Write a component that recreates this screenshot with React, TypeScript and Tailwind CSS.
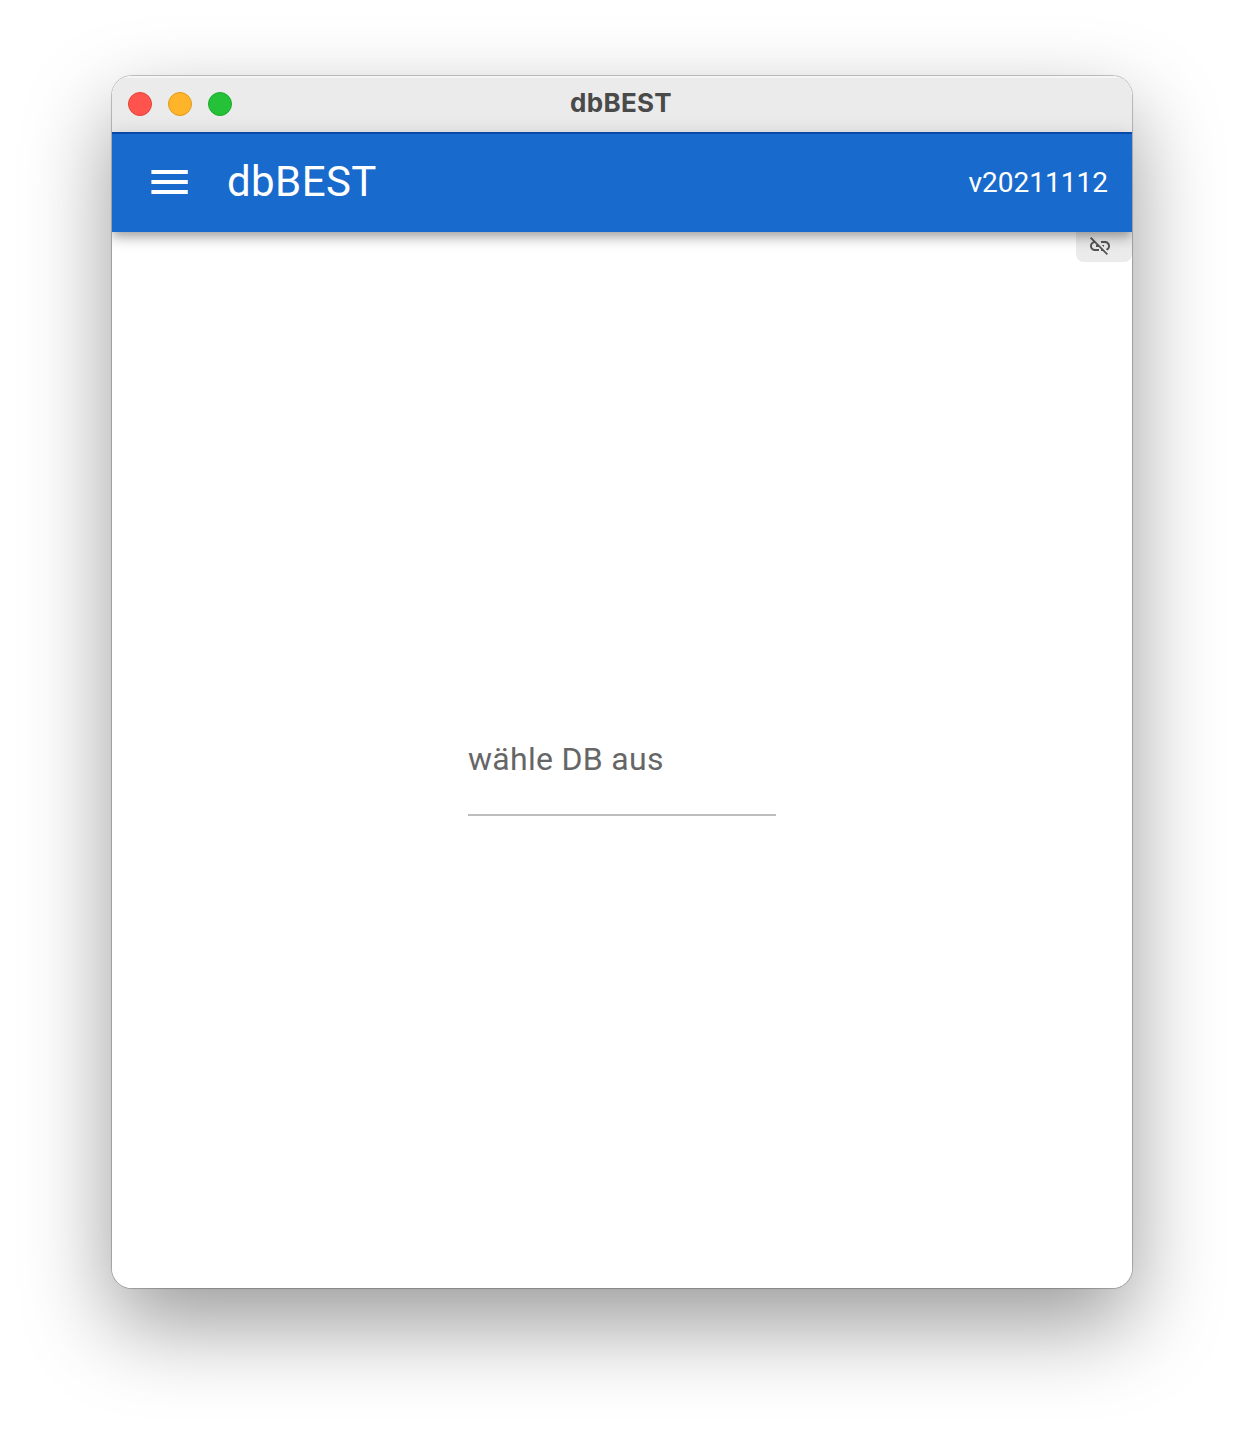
export default function App() {
  return (
    <div className="h-[1436px] w-[1244px] overflow-hidden bg-white px-[112px] pt-[76px]">
      <div className="flex h-[1212px] w-[1020px] flex-col rounded-[20px] shadow-[0_0_0_1px_rgba(0,0,0,0.18),0_0_2px_rgba(0,0,0,0.15),0_36px_88px_rgba(0,0,0,0.4)]">
        <div className="flex h-full flex-col overflow-hidden rounded-[20px] bg-white">
          <header className="grid h-[56px] shrink-0 grid-cols-3 items-center bg-[#ebebec] px-4 shadow-[inset_0_2px_0_#f5f5f5]">
            <div className="flex gap-4">
              <span className="size-6 rounded-full border border-[#e24138] bg-[#ff544d]" />
              <span className="size-6 rounded-full border border-[#e09a1a] bg-[#ffb429]" />
              <span className="size-6 rounded-full border border-[#1aab29] bg-[#25c138]" />
            </div>
            <h1 className="-mt-0.5 pr-[2px] text-center font-[Inter,sans-serif] text-[26px] leading-8 font-bold tracking-[0.3px] text-[#4a4a4a]">dbBEST</h1>
          </header>
          <nav className="z-10 flex h-[100px] shrink-0 items-center border-t-2 border-[#0848a8] bg-[#196acd] pr-6 pb-0.5 pl-[33px] font-[Roboto,sans-serif] text-white shadow-[0_4px_8px_-2px_rgba(0,0,0,0.2),0_8px_10px_rgba(0,0,0,0.14),0_2px_20px_rgba(0,0,0,0.12)]">
            <svg viewBox="0 0 24 24" className="size-12" fill="currentColor"><path d="M3.200 18h18.200v-2H3.200v2zm0-5h18.200v-2H3.200v2zm0-7v2h18.200V6H3.200z" /></svg>
            <span className="ml-[34px] text-[42px] leading-none tracking-[0.42px]">dbBEST</span>
            <span className="mt-0.5 ml-auto text-[28px] leading-none">v20211112</span>
          </nav>
          <main className="flex grow flex-col items-center font-[Roboto,sans-serif]">
            <div className="flex h-[30px] w-14 items-center self-end rounded-b-lg bg-[#ebebeb] pb-0.5 pl-3">
              <svg viewBox="0 0 24 24" className="size-6 text-[#555]" fill="currentColor"><path d="M17 7h-4v1.900h4c1.710 0 3.100 1.390 3.100 3.100 0 1.430-.980 2.630-2.310 2.980l1.460 1.460C20.880 15.610 22 13.950 22 12c0-2.760-2.240-5-5-5zm-1 4h-2.190l2 2H16v-2zM2 4.270l3.110 3.110C3.290 8.120 2 9.910 2 12c0 2.760 2.240 5 5 5h4v-1.900H7c-1.710 0-3.100-1.390-3.100-3.100 0-1.590 1.210-2.900 2.760-3.070L8.730 11H8v2h2.730L13 15.270V17h1.730l4.010 4L20 19.740 3.270 3 2 4.270z" /></svg>
            </div>
            <div className="mt-[442px] flex h-28 w-[308px] items-center border-b-2 border-[#bdbdbd] text-[32px] tracking-[0.3px] text-[#666]">wähle DB aus</div>
          </main>
        </div>
      </div>
    </div>
  );
}
